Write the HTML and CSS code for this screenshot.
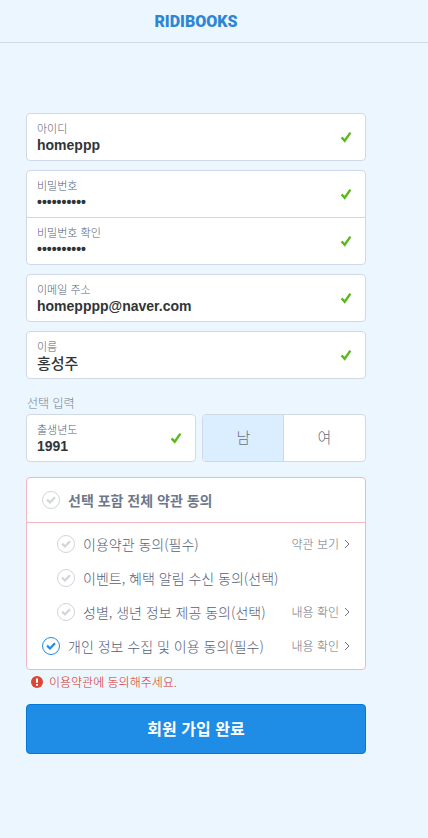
FILE: index.html
```html
<!DOCTYPE html>
<html lang="ko">
<head>
<meta charset="utf-8">
<meta name="viewport" content="width=device-width, initial-scale=1">
<title>RIDIBOOKS 회원 가입</title>
<link rel="stylesheet" href="styles.css">
</head>
<body>
<svg class="sprite" aria-hidden="true">
  <symbol id="tick" viewBox="0 0 12 12"><path d="M1.6 6.4 4.7 9.8 10.4 1.6" fill="none" stroke="currentColor" stroke-width="2.4"/></symbol>
  <symbol id="small-tick" viewBox="0 0 18 18"><path d="M5.1 8.6 8 11.5 13 6.2" fill="none" stroke="currentColor" stroke-width="2.2"/></symbol>
  <symbol id="arrow" viewBox="0 0 6 10"><path d="M1 1 5 5 1 9" fill="none" stroke="currentColor"/></symbol>
</svg>
<header class="header"><a class="logo" href="#">RIDIBOOKS</a></header>
<main class="page">
  <form class="form">
    <div class="group">
      <div class="field">
        <div class="field-body"><label for="user-id">아이디</label><input id="user-id" type="text" value="homeppp"></div>
        <svg class="valid"><use href="#tick"/></svg>
      </div>
    </div>
    <div class="group">
      <div class="field">
        <div class="field-body"><label for="pw">비밀번호</label><input id="pw" type="password" value="abcdefghij"></div>
        <svg class="valid"><use href="#tick"/></svg>
      </div>
      <div class="field">
        <div class="field-body"><label for="pw2">비밀번호 확인</label><input id="pw2" type="password" value="abcdefghij"></div>
        <svg class="valid"><use href="#tick"/></svg>
      </div>
    </div>
    <div class="group">
      <div class="field">
        <div class="field-body"><label for="email">이메일 주소</label><input id="email" type="text" value="homepppp@naver.com"></div>
        <svg class="valid"><use href="#tick"/></svg>
      </div>
    </div>
    <div class="group">
      <div class="field">
        <div class="field-body"><label for="name">이름</label><input id="name" class="korean" type="text" value="홍성주"></div>
        <svg class="valid"><use href="#tick"/></svg>
      </div>
    </div>
    <h2 class="optional-title">선택 입력</h2>
    <div class="optional">
      <div class="group">
        <div class="field">
          <div class="field-body"><label for="birth">출생년도</label><input id="birth" type="text" value="1991"></div>
          <svg class="valid"><use href="#tick"/></svg>
        </div>
      </div>
      <div class="gender" role="radiogroup" aria-label="성별">
        <label><input type="radio" name="gender" checked><span>남</span></label>
        <label><input type="radio" name="gender"><span>여</span></label>
      </div>
    </div>
    <section class="terms">
      <div class="terms-all">
        <label class="agree"><span class="check"><input type="checkbox"><svg><use href="#small-tick"/></svg></span>선택 포함 전체 약관 동의</label>
      </div>
      <ul class="terms-list">
        <li class="nested">
          <label class="agree"><span class="check"><input type="checkbox"><svg><use href="#small-tick"/></svg></span>이용약관 동의(필수)</label>
          <a href="#">약관 보기<svg><use href="#arrow"/></svg></a>
        </li>
        <li class="nested">
          <label class="agree"><span class="check"><input type="checkbox"><svg><use href="#small-tick"/></svg></span>이벤트, 혜택 알림 수신 동의(선택)</label>
        </li>
        <li class="nested">
          <label class="agree"><span class="check"><input type="checkbox"><svg><use href="#small-tick"/></svg></span>성별, 생년 정보 제공 동의(선택)</label>
          <a href="#">내용 확인<svg><use href="#arrow"/></svg></a>
        </li>
        <li>
          <label class="agree"><span class="check"><input type="checkbox" checked><svg><use href="#small-tick"/></svg></span>개인 정보 수집 및 이용 동의(필수)</label>
          <a href="#">내용 확인<svg><use href="#arrow"/></svg></a>
        </li>
      </ul>
    </section>
    <p class="error">
      <svg viewBox="0 0 12 12"><circle cx="6" cy="6" r="6" fill="#dc4634"/><path d="M6 2.4V6.8M6 8V9.8" stroke="#fff" stroke-width="2"/></svg>
      이용약관에 동의해주세요.
    </p>
    <button class="submit" type="button">회원 가입 완료</button>
  </form>
</main>
</body>
</html>
```

FILE: styles.css
```css
* {
  box-sizing: border-box;
}

body {
  margin: 0;
  min-height: 100vh;
  background: #ebf6ff;
  color: #566178;
  font-family: "Noto Sans CJK KR", sans-serif;
  font-size: 14px;
  font-weight: 300;
  line-height: 18px;
}

input,
button {
  font-family: inherit;
}

.sprite {
  display: none;
}

.header {
  display: flex;
  align-items: center;
  justify-content: center;
  height: 43px;
  padding: 1px 62px 0 26px;
  border-bottom: 1px solid #d1dce6;
}

.logo {
  color: #2e86d3;
  font-family: Roboto, sans-serif;
  font-size: 16px;
  font-weight: 900;
  line-height: 20px;
  text-decoration: none;
}

.page {
  padding: 70px 62px 40px 26px;
}

.form {
  display: flex;
  flex-direction: column;
}

.group {
  margin-bottom: 9px;
  overflow: hidden;
  background: #fff;
  border: 1px solid #d1d9e6;
  border-radius: 4px;
}

.field {
  display: flex;
  align-items: center;
  height: 46px;
  padding: 0 13px 0 10px;
}

.field + .field {
  height: 47px;
  border-top: 1px solid #d1d9e6;
}

.field-body {
  display: flex;
  flex: 1;
  flex-direction: column;
  min-width: 0;
}

.field label {
  font-size: 11px;
  line-height: 15px;
}

.field input {
  width: 100%;
  height: 18px;
  padding: 0;
  border: 0;
  outline: 0;
  background: none;
  color: #303538;
  font-family: "Liberation Sans", "Noto Sans CJK KR", sans-serif;
  font-size: 14px;
  font-weight: 700;
}

.field .korean {
  font-size: 15px;
  font-weight: 500;
}

.valid {
  width: 12px;
  height: 12px;
  color: #5db81e;
}

.optional-title {
  margin: 5px 0 2px 1px;
  color: #748194;
  font-size: 12px;
  font-weight: 300;
  line-height: 19px;
}

.optional {
  display: grid;
  grid-template-columns: 170fr 164fr;
  gap: 6px;
  margin-bottom: 15px;
}

.optional .group {
  margin: 0;
}

.gender {
  display: grid;
  grid-template-columns: 1fr 1fr;
  overflow: hidden;
  background: #fff;
  border: 1px solid #d1d9e6;
  border-radius: 4px;
}

.gender label {
  display: grid;
}

.gender input,
.gender span {
  grid-area: 1 / 1;
}

.gender input {
  width: 100%;
  height: 100%;
  margin: 0;
  appearance: none;
}

.gender input:checked {
  background: #dbeeff;
  border-right: 1px solid #c5dcf0;
}

.gender span {
  place-self: center;
  padding-bottom: 2px;
  color: #667080;
  font-size: 15px;
}

.terms {
  background: #fff;
  border: 1px solid #f0b7c0;
  border-radius: 4px;
}

.terms-all {
  display: flex;
  height: 45px;
  padding: 0 15px;
  border-bottom: 1px solid #f0b7c0;
  color: #6e788c;
  font-weight: 700;
}

.terms-list {
  margin: 0;
  padding: 4px 15px 6px;
  list-style: none;
}

.terms-list li {
  display: flex;
  align-items: center;
  justify-content: space-between;
  height: 34px;
}

.terms-list .nested {
  padding-left: 15px;
}

.agree {
  display: flex;
  align-items: center;
  gap: 8px;
  white-space: nowrap;
}

.check {
  display: grid;
  width: 18px;
  height: 18px;
  color: #d1d5d9;
}

.check input,
.check svg {
  grid-area: 1 / 1;
  width: 18px;
  height: 18px;
}

.check input {
  margin: 0;
  border: 1px solid #d1d5d9;
  border-radius: 50%;
  appearance: none;
}

.check svg {
  pointer-events: none;
}

.check input:checked {
  border-color: #1f8ce6;
}

.check input:checked + svg {
  color: #1f8ce6;
}

.terms-list a {
  display: flex;
  align-items: center;
  gap: 5px;
  color: #6c757f;
  font-size: 12px;
  text-decoration: none;
  white-space: nowrap;
}

.terms-list a svg {
  width: 6px;
  height: 10px;
}

.error {
  display: flex;
  align-items: center;
  gap: 6px;
  margin: 3px 0 13px 5px;
  color: #d62f1c;
  font-size: 12px;
  line-height: 18px;
}

.error svg {
  width: 12px;
  height: 12px;
}

.submit {
  height: 50px;
  padding: 0 0 2px;
  border: 1px solid #0077d9;
  border-radius: 4px;
  background: #1f8ce6;
  color: #fff;
  font-size: 16px;
  font-weight: 700;
}
```
